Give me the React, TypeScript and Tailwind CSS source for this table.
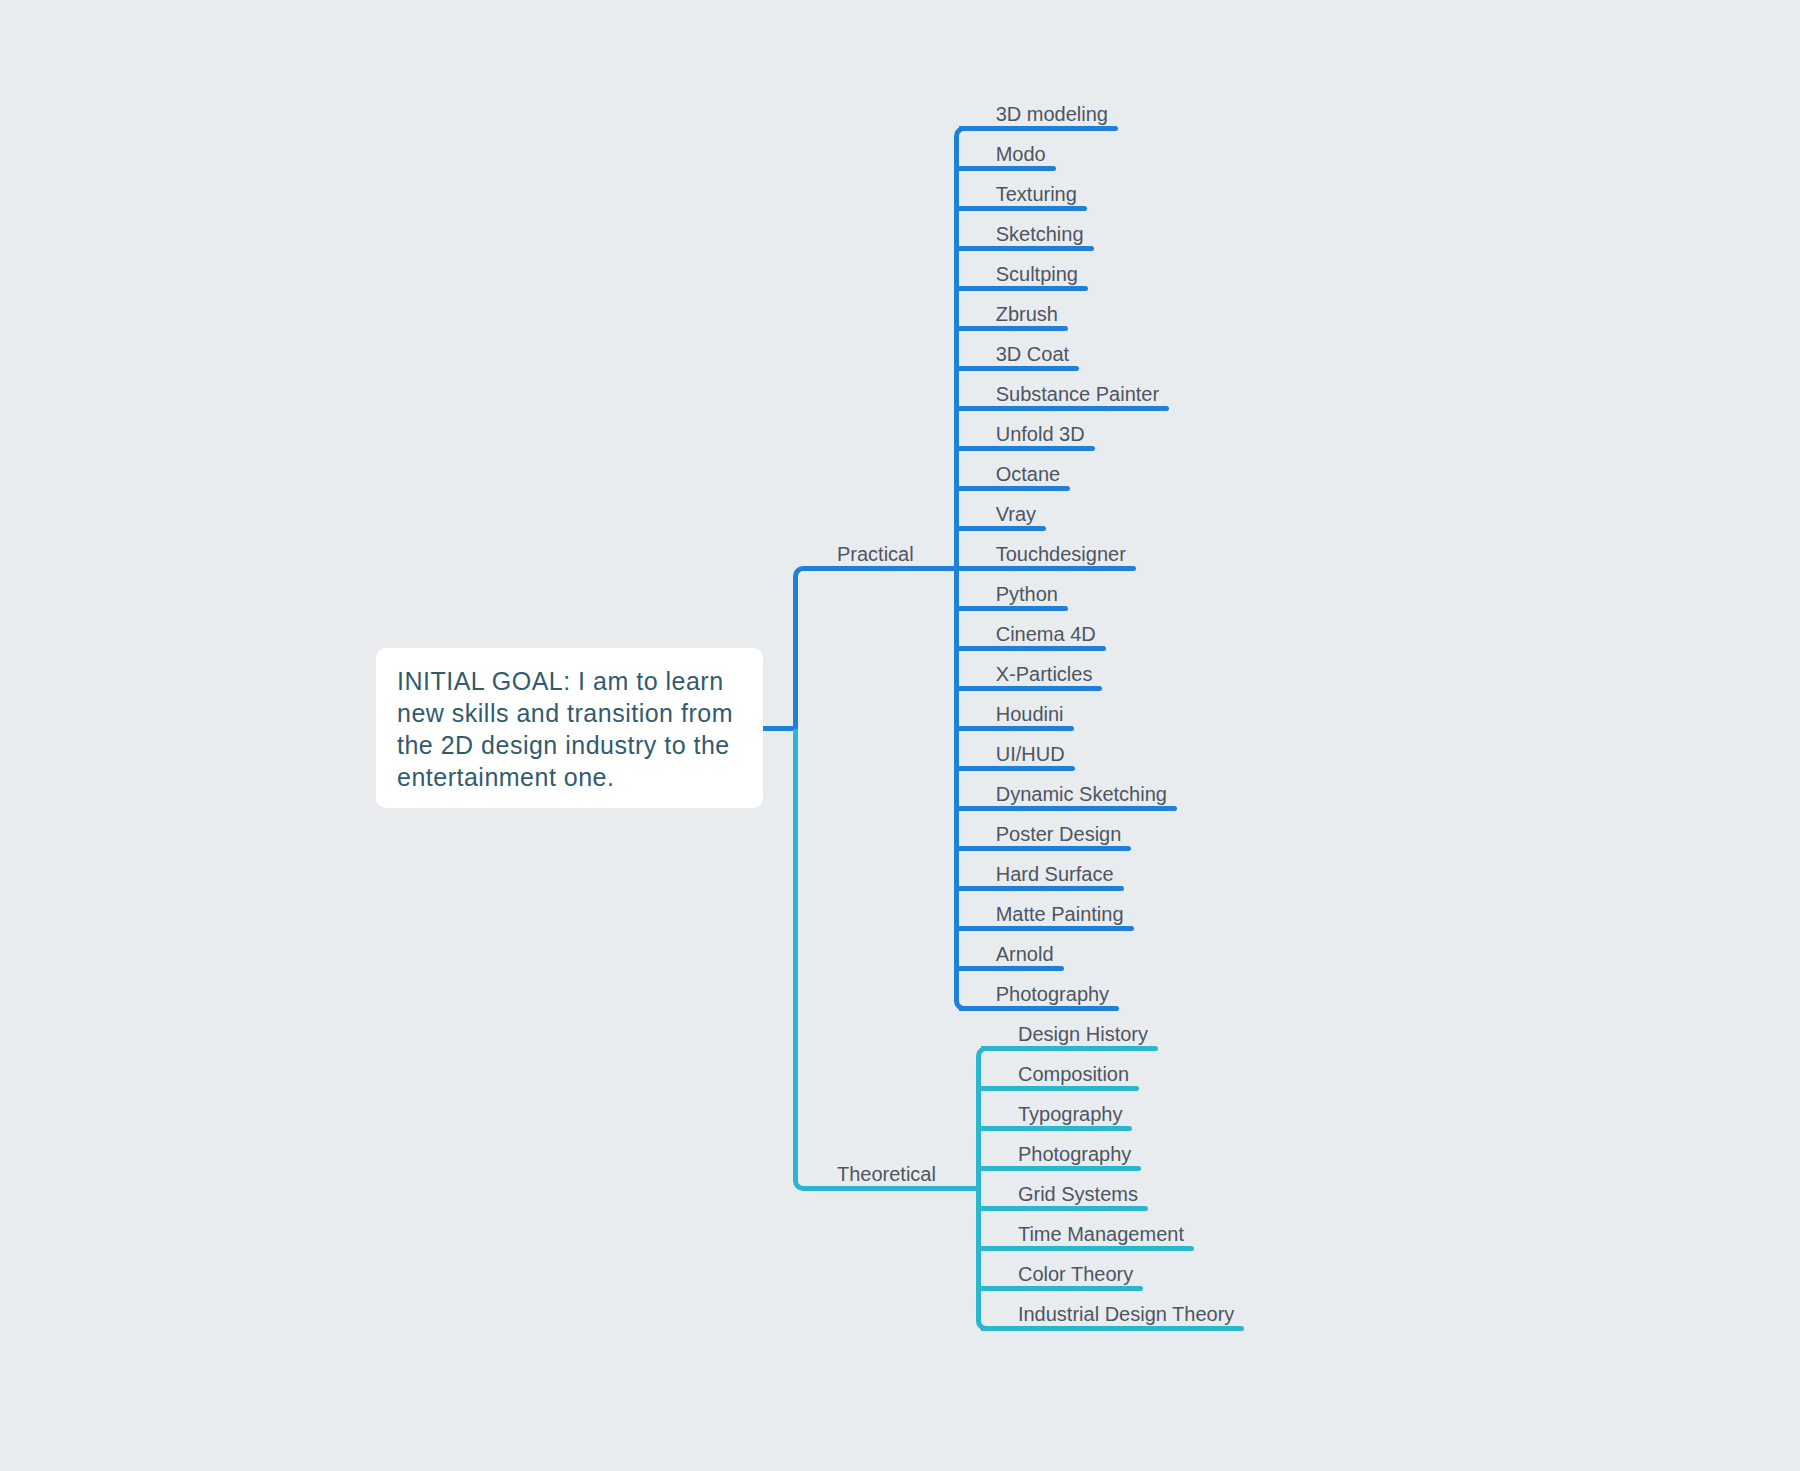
import React from "react";

const practical = [
  "3D modeling",
  "Modo",
  "Texturing",
  "Sketching",
  "Scultping",
  "Zbrush",
  "3D Coat",
  "Substance Painter",
  "Unfold 3D",
  "Octane",
  "Vray",
  "Touchdesigner",
  "Python",
  "Cinema 4D",
  "X-Particles",
  "Houdini",
  "UI/HUD",
  "Dynamic Sketching",
  "Poster Design",
  "Hard Surface",
  "Matte Painting",
  "Arnold",
  "Photography",
];

const theoretical = [
  "Design History",
  "Composition",
  "Typography",
  "Photography",
  "Grid Systems",
  "Time Management",
  "Color Theory",
  "Industrial Design Theory",
];

type Tone = { line: string; border: string };

const blue: Tone = { line: "bg-[#1f80da]", border: "border-[#1f80da]" };
const teal: Tone = { line: "bg-[#2bb6cf]", border: "border-[#2bb6cf]" };

// one leaf: text sitting on its underline
function Leaf({ label, tone }: { label: string; tone: Tone }) {
  return (
    <div className="h-[40px] flex flex-col justify-end items-start">
      <div className="-ml-[7px] flex flex-col">
        <span className="pl-[37px] pr-[10px] text-[20px] leading-[24px] text-[#4d5661] whitespace-nowrap">
          {label}
        </span>
        <div className={`h-[5px] rounded-r-full ${tone.line}`} />
      </div>
    </div>
  );
}

function Branch({
  label,
  items,
  tone,
  bracket,
}: {
  label: string;
  items: string[];
  tone: Tone;
  bracket: string;
}) {
  return (
    <div className="flex items-center">
      {/* label on the connector */}
      <div className="h-[40px] flex flex-col justify-end">
        <span className="pl-[32px] pr-[40px] text-[20px] leading-[24px] text-[#4d5661] whitespace-nowrap">
          {label}
        </span>
        <div className={`h-[5px] ${tone.line}`} />
      </div>

      {/* children */}
      <div className="flex items-start">
        <div
          className={`mt-[35px] w-[12px] border-l-[5px] border-y-[5px] rounded-l-[10px] ${tone.border} ${bracket}`}
        />
        <div className="flex flex-col">
          {items.map((item, i) => (
            <Leaf key={i} label={item} tone={tone} />
          ))}
        </div>
      </div>
    </div>
  );
}

export default function App() {
  return (
    <div className="min-h-[1471px] w-full bg-[#e9ecef] font-['Liberation_Sans',Arial,sans-serif]">
      <div className="flex items-start pl-[376px] pt-[91px]">
        {/* root node */}
        <div className="mt-[557px] flex items-center">
          <div className="w-[387px] h-[160px] rounded-[10px] bg-white pl-[21px] pr-[10px] pt-[17px] text-[25px] leading-[32px] text-[#325b6e] tracking-[0.5px] whitespace-nowrap">
            INITIAL GOAL: I am to learn
            <br />
            new skills and transition from
            <br />
            the 2D design industry to the
            <br />
            entertainment one.
          </div>
          <div className="w-[30px] h-[5px] bg-[#1f80da]" />
        </div>

        {/* root spine */}
        <div className="mt-[475px] w-[12px] flex flex-col">
          <div className="h-[163px] border-l-[5px] border-t-[5px] rounded-tl-[10px] border-[#1f80da]" />
          <div className="h-[462px] border-l-[5px] border-b-[5px] rounded-bl-[10px] border-[#2bb6cf]" />
        </div>

        {/* branches */}
        <div className="flex flex-col items-start">
          <Branch label="Practical" items={practical} tone={blue} bracket="h-[885px]" />
          <Branch label="Theoretical" items={theoretical} tone={teal} bracket="h-[285px]" />
        </div>
      </div>
    </div>
  );
}
